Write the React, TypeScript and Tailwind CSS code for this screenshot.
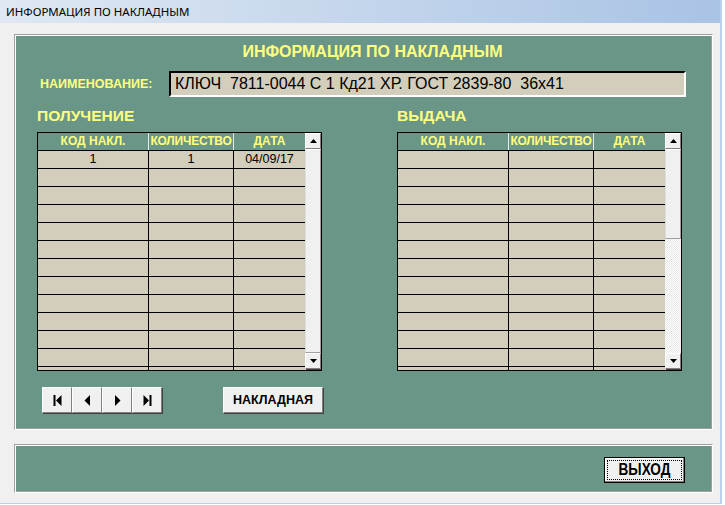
import React from 'react';

const font = { fontFamily: '"Liberation Sans", Arial, sans-serif' };

const NavIcon = ({ kind }: { kind: 'first' | 'prev' | 'next' | 'last' }) => (
  <svg width="11" height="13" viewBox="0 0 11 13" className="fill-black">
    {kind === 'first' && (
      <>
        <rect x="1.5" y="1" width="2" height="11" />
        <polygon points="9.5,1 9.5,12 4,6.5" />
      </>
    )}
    {kind === 'prev' && <polygon points="8,1 8,12 2.5,6.5" />}
    {kind === 'next' && <polygon points="3,1 3,12 8.5,6.5" />}
    {kind === 'last' && (
      <>
        <polygon points="1.5,1 1.5,12 7,6.5" />
        <rect x="7.5" y="1" width="2" height="11" />
      </>
    )}
  </svg>
);

const raised =
  'border border-t-white border-l-white border-r-[#808080] border-b-[#808080] bg-[#f0f0f0] shadow-[1px_1px_0_#404040]';

const ScrollButton = ({ up }: { up?: boolean }) => (
  <div className={`flex h-[16px] w-[16px] shrink-0 items-center justify-center ${raised}`}>
    <svg width="7" height="4" viewBox="0 0 7 4" className="fill-black">
      {up ? <polygon points="0,4 7,4 3.5,0" /> : <polygon points="0,0 7,0 3.5,4" />}
    </svg>
  </div>
);

const ScrollBar = ({ full }: { full: boolean }) => (
  <div className="flex h-full w-[16px] shrink-0 flex-col bg-[repeating-conic-gradient(#ffffff_0_25%,#e6e6e6_0_50%)] bg-[length:2px_2px]">
    <ScrollButton up />
    {full ? (
      <div className="flex-1 border border-t-white border-l-[#dcdcdc] border-r-[#a0a0a0] border-b-[#a0a0a0] bg-[#f0f0f0]" />
    ) : (
      <>
        <div className="h-[90px] shrink-0 border border-t-white border-l-[#dcdcdc] border-r-[#a0a0a0] border-b-[#a0a0a0] bg-[#f0f0f0]" />
        <div className="flex-1" />
      </>
    )}
    <ScrollButton />
    <div className="h-[1px] shrink-0" />
  </div>
);

type Row = { code: string; qty: string; date: string };

const Grid = ({ rows, full }: { rows: Row[]; full: boolean }) => {
  const filled = Array.from({ length: 13 }, (_, i) => rows[i] ?? { code: '', qty: '', date: '' });
  return (
    <div className="flex h-[239px] w-[285px] overflow-hidden border border-black bg-[#d3cebb]">
      <div className="flex w-[267px] flex-col overflow-hidden">
        <div className="flex h-[17px] shrink-0 bg-[#699686] text-[12px] font-bold leading-[17px] text-[#ffff80]">
          <div className="w-[111px] shrink-0 border-r border-[#e6e6e6] text-center">КОД НАКЛ.</div>
          <div className="w-[85px] shrink-0 overflow-hidden whitespace-nowrap border-r border-[#e6e6e6] text-center tracking-[-0.2px]">
            КОЛИЧЕСТВО
          </div>
          <div className="flex-1 text-center">ДАТА</div>
        </div>
        {filled.map((r, i) => (
          <div key={i} className="flex h-[18px] shrink-0 border-t border-black text-[12.5px] leading-[16px] text-black">
            <div className="w-[111px] shrink-0 border-r border-black text-center">{r.code}</div>
            <div className="w-[85px] shrink-0 border-r border-black text-center">{r.qty}</div>
            <div className="flex-1 text-center">{r.date}</div>
          </div>
        ))}
      </div>
      <ScrollBar full={full} />
    </div>
  );
};

const etched =
  'border border-t-[#a0a0a0] border-l-[#a0a0a0] border-r-white border-b-white shadow-[inset_1px_1px_0_#ffffff,inset_-1px_-1px_0_#a0a0a0]';

export default function App() {
  return (
    <div className="h-[505px] w-[725px] bg-white" style={font}>
      <div className="flex h-[504px] w-[722px] flex-col border-r-2 border-b border-[#b9d1ea] bg-[#f0f0f0]">
        <div
          className="flex h-[23px] shrink-0 items-center bg-gradient-to-r from-[#dfe8f3] to-[#a9c3e4] pl-[6px] text-[11.5px] text-black"
          style={{ fontFamily: '"Noto Sans", "Liberation Sans", sans-serif' }}
        >
          ИНФОРМАЦИЯ ПО НАКЛАДНЫМ
        </div>

        <div className="flex flex-col pl-[14px] pt-[11px]">
          <div className={`flex h-[396px] w-[699px] flex-col bg-[#699686] ${etched}`}>
            <div className="mt-[7px] h-[20px] pl-[18px] text-center text-[16px] font-bold leading-[20px] text-[#ffff80]">
              ИНФОРМАЦИЯ ПО НАКЛАДНЫМ
            </div>

            <div className="mt-[9px] flex items-center pl-[25px]">
              <div className="w-[129px] text-[12.5px] font-bold text-[#ffff80]">НАИМЕНОВАНИЕ:</div>
              <div className="flex h-[26px] w-[517px] items-center whitespace-pre border-2 border-t-black border-l-black border-r-white border-b-white bg-[#d3cebb] pl-[4px] text-[16px] text-black">
                КЛЮЧ  7811-0044 С 1 Кд21 ХР. ГОСТ 2839-80  36х41
              </div>
            </div>

            <div className="mt-[10px] flex pl-[22px]">
              <div className="flex w-[360px] flex-col">
                <div className="h-[18px] text-[15.5px] font-bold leading-[18px] text-[#ffff80]">ПОЛУЧЕНИЕ</div>
                <div className="mt-[7px]">
                  <Grid full rows={[{ code: '1', qty: '1', date: '04/09/17' }]} />
                </div>
                <div className="mt-[16px] flex items-center">
                  <div className="ml-[5px] flex">
                    {(['first', 'prev', 'next', 'last'] as const).map((k) => (
                      <div key={k} className={`flex h-[26px] w-[30px] items-center justify-center ${raised}`}>
                        <NavIcon kind={k} />
                      </div>
                    ))}
                  </div>
                  <div
                    className={`ml-[61px] flex h-[26px] w-[100px] items-center justify-center text-[12.5px] font-bold text-black ${raised}`}
                  >
                    НАКЛАДНАЯ
                  </div>
                </div>
              </div>
              <div className="flex flex-col">
                <div className="h-[18px] text-[15.5px] font-bold leading-[18px] text-[#ffff80]">ВЫДАЧА</div>
                <div className="mt-[7px]">
                  <Grid full={false} rows={[]} />
                </div>
              </div>
            </div>
          </div>

          <div className={`mt-[14px] flex h-[49px] w-[699px] items-start justify-end bg-[#699686] pr-[27px] pt-[12px] ${etched}`}>
            <div className="flex h-[26px] w-[81px] items-center justify-center border border-black bg-[#f0f0f0] p-[2px] shadow-[inset_-1px_-1px_0_#808080,inset_1px_1px_0_#ffffff]">
              <div className="flex h-full w-full items-center justify-center border border-dotted border-black text-black">
                <span className="inline-block scale-x-[0.8] text-[17px] font-bold">ВЫХОД</span>
              </div>
            </div>
          </div>
        </div>
      </div>
    </div>
  );
}
